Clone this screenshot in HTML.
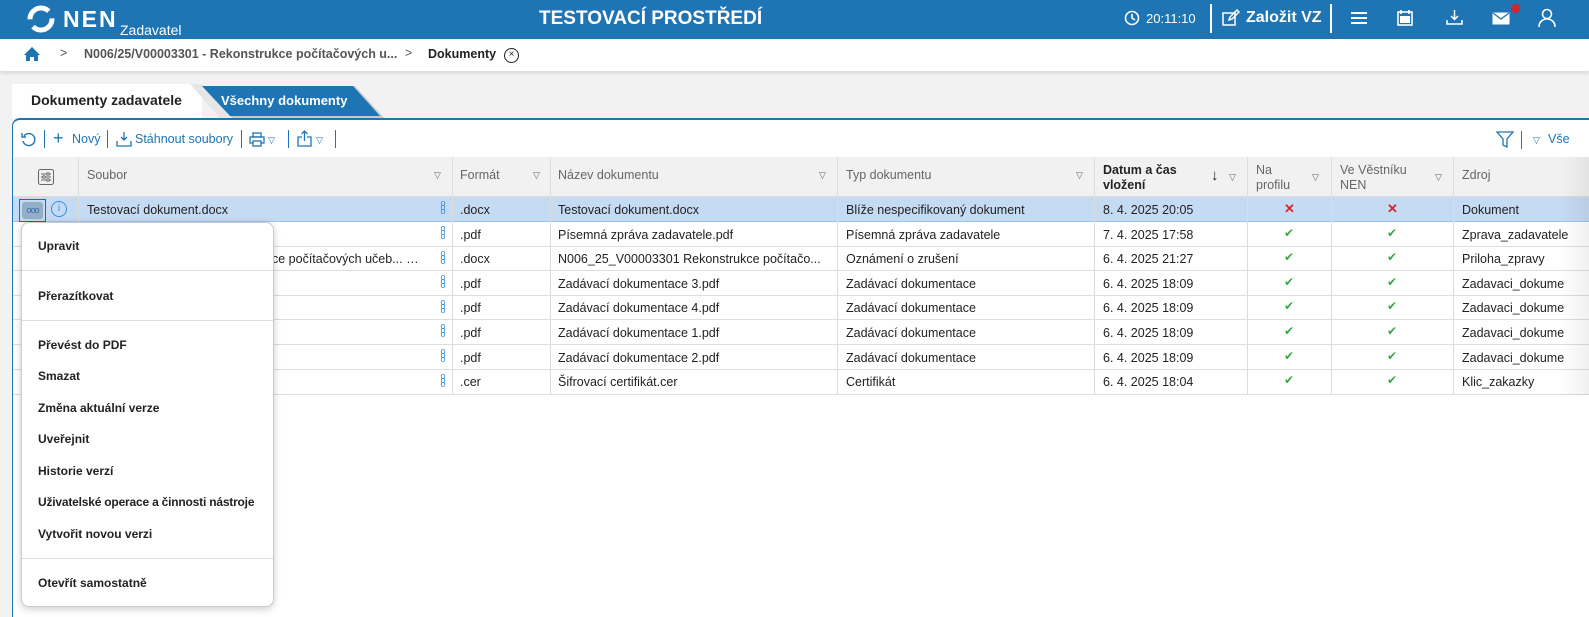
<!DOCTYPE html>
<html><head><meta charset="utf-8"><style>
*{box-sizing:border-box;margin:0;padding:0}
body{width:1589px;height:617px;overflow:hidden;background:#f2f2f2;font-family:"Liberation Sans",sans-serif;font-size:12.5px;color:#222;position:relative}
.a{position:absolute;white-space:nowrap}
.top{left:0;top:0;width:1589px;height:39px;background:#1f74b3;color:#fff}
.bc{left:0;top:39px;width:1589px;height:32px;background:#fff;box-shadow:0 2px 4px rgba(0,0,0,.12)}
.panel{left:12px;top:118px;width:1577px;height:499px;background:#fff;border-top:2px solid #1f74b3;border-left:1px solid #1f74b3;border-top-left-radius:8px}
.hdr{top:157px;height:40px;background:#f1f1f1;border-bottom:1px solid #ddd}
.vl{width:1px;background:#ddd}
.row{left:13px;width:1576px;border-bottom:1px solid #ddd;background:#fff}
.hl{background:#c5daf3;border-bottom:1px solid #9fc3ee}
.ht{color:#666}
.tri{color:#666;font-size:9px}
.g{color:#3aa64a;font-size:12px}
.r{color:#d9262c;font-size:13px;font-weight:bold}
.menu{left:21px;top:222px;width:253px;height:385px;background:#fff;border:1px solid #ccc;border-radius:8px;box-shadow:0 2px 8px rgba(0,0,0,.2)}
.mi{left:16px;font-weight:bold;font-size:12px;color:#222}
.sep{left:0;width:251px;height:1px;background:#ddd}
.dots{color:#3a8ed6;font-size:9px;line-height:4px;width:6px;text-align:center}
</style></head><body>
<div class="a top">
 <svg class="a" style="left:26px;top:4px" width="30" height="30" viewBox="0 0 30 30"><circle cx="15" cy="15" r="11" fill="none" stroke="#fff" stroke-width="5" stroke-dasharray="26 8"/></svg>
 <div class="a" style="left:63px;top:6px;font-size:23px;font-weight:bold;letter-spacing:2px">NEN</div>
 <div class="a" style="left:120px;top:22px;font-size:14px">Zadavatel</div>
 <div class="a" style="left:539px;top:8px;font-size:19px;font-weight:bold">TESTOVACÍ PROSTŘEDÍ</div>
 <svg class="a" style="left:1124px;top:10px" width="16" height="16"><circle cx="8" cy="8" r="6.5" fill="none" stroke="#fff" stroke-width="1.6"/><path d="M8 4v4l3 2" stroke="#fff" stroke-width="1.6" fill="none"/></svg>
 <div class="a" style="left:1146px;top:11px;font-size:13px">20:11:10</div>
 <div class="a" style="left:1210px;top:4px;width:2px;height:29px;background:#fff"></div>
 <svg class="a" style="left:1222px;top:9px" width="18" height="18"><rect x="1" y="4" width="12" height="12" fill="none" stroke="#fff" stroke-width="1.5"/><path d="M7 11l1-3 7-7 2 2-7 7z" fill="none" stroke="#fff" stroke-width="1.5"/></svg>
 <div class="a" style="left:1246px;top:9px;font-size:16px;font-weight:bold">Založit VZ</div>
 <div class="a" style="left:1330px;top:4px;width:2px;height:29px;background:#fff"></div>
 <div class="a" style="left:1351px;top:12px;width:16px;height:2px;background:#fff;box-shadow:0 5px 0 #fff,0 10px 0 #fff"></div>
 <svg class="a" style="left:1397px;top:9px" width="16" height="17"><rect x="1" y="3" width="14" height="13" fill="none" stroke="#fff" stroke-width="1.6"/><rect x="3" y="7" width="10" height="7" fill="#fff"/><path d="M4 1v4M12 1v4" stroke="#fff" stroke-width="1.6"/></svg>
 <svg class="a" style="left:1446px;top:9px" width="17" height="17"><path d="M8.5 1v9M5 7l3.5 3.5L12 7M1 11v4h15v-4" fill="none" stroke="#fff" stroke-width="1.5"/></svg>
 <svg class="a" style="left:1492px;top:12px" width="18" height="13"><rect x="0.5" y="0.5" width="17" height="12" fill="#fff"/><path d="M1 1l8 6 8-6" fill="none" stroke="#1f74b3" stroke-width="1.3"/></svg>
 <div class="a" style="left:1511px;top:4px;width:9px;height:9px;border-radius:50%;background:#d3262c"></div>
 <svg class="a" style="left:1538px;top:8px" width="18" height="20"><circle cx="9" cy="6" r="4.5" fill="none" stroke="#fff" stroke-width="1.6"/><path d="M1 19c0-5 3.5-8 8-8s8 3 8 8" fill="none" stroke="#fff" stroke-width="1.6"/></svg>
</div>
<div class="a bc">
 <svg class="a" style="left:23px;top:7px" width="18" height="16"><path d="M9 1L1 9h2v6h4v-4h4v4h4V9h2z" fill="#1f74b3"/></svg>
 <div class="a" style="left:60px;top:7px;color:#555">&gt;</div>
 <div class="a" style="left:84px;top:8px;font-weight:bold;color:#555;font-size:12.5px">N006/25/V00003301 - Rekonstrukce počítačových u...</div>
 <div class="a" style="left:405px;top:7px;color:#555">&gt;</div>
 <div class="a" style="left:428px;top:8px;font-weight:bold;font-size:12.5px">Dokumenty</div>
 <div class="a" style="left:504px;top:9px;width:15px;height:15px;border:1.3px solid #222;border-radius:50%;font-size:10px;line-height:12px;text-align:center">×</div>
</div>
<div class="a" style="left:12px;top:84px;width:190px;height:34px;background:#fff"></div>
<div class="a" style="left:31px;top:92px;font-size:14px;font-weight:bold">Dokumenty zadavatele</div>
<svg class="a" style="left:190px;top:84px" width="195" height="34"><polygon points="0,0 12,0 40,34 30,34" fill="#e6e6e6"/><polygon points="12,2 165,2 194,34 42,34" fill="#c9c9c9"/><polygon points="12,2 163,2 190,32 40,32" fill="#1f74b3"/></svg>
<div class="a" style="left:221px;top:93px;font-size:13px;font-weight:bold;color:#fff">Všechny dokumenty</div>
<div class="a panel"></div>
<svg class="a" style="left:21px;top:131px" width="16" height="16"><path d="M3 5a6 6 0 1 1-1 5" fill="none" stroke="#1f74b3" stroke-width="1.4"/><path d="M1 2v4h4" fill="none" stroke="#1f74b3" stroke-width="1.4"/></svg>
<div class="a" style="left:44px;top:130px;width:1px;height:18px;background:#1f74b3"></div>
<div class="a" style="left:53px;top:128px;font-size:18px;color:#1f74b3">+</div>
<div class="a" style="left:72px;top:132px;color:#1f74b3">Nový</div>
<div class="a" style="left:107px;top:130px;width:1px;height:18px;background:#1f74b3"></div>
<svg class="a" style="left:116px;top:131px" width="16" height="16"><path d="M8 1v8M5 6l3 3 3-3M1 10v5h14v-5" fill="none" stroke="#1f74b3" stroke-width="1.3"/></svg>
<div class="a" style="left:135px;top:132px;color:#1f74b3">Stáhnout soubory</div>
<div class="a" style="left:241px;top:130px;width:1px;height:18px;background:#1f74b3"></div>
<svg class="a" style="left:249px;top:132px" width="16" height="15"><rect x="4" y="1" width="8" height="4" fill="none" stroke="#1f74b3" stroke-width="1.3"/><rect x="1" y="5" width="14" height="6" fill="none" stroke="#1f74b3" stroke-width="1.3"/><rect x="4" y="9" width="8" height="5" fill="#fff" stroke="#1f74b3" stroke-width="1.3"/></svg>
<div class="a tri" style="left:268px;top:135px;color:#1f74b3">▽</div>
<div class="a" style="left:288px;top:130px;width:1px;height:18px;background:#1f74b3"></div>
<svg class="a" style="left:297px;top:130px" width="15" height="17"><path d="M7.5 1v10M4.5 4l3-3 3 3M5 7H1v9h13V7h-4" fill="none" stroke="#1f74b3" stroke-width="1.3"/></svg>
<div class="a tri" style="left:316px;top:135px;color:#1f74b3">▽</div>
<div class="a" style="left:335px;top:130px;width:1px;height:18px;background:#1f74b3"></div>
<svg class="a" style="left:1496px;top:131px" width="18" height="17"><path d="M1 1h16l-6 7v8l-4-2V8z" fill="none" stroke="#1f74b3" stroke-width="1.3"/></svg>
<div class="a" style="left:1521px;top:131px;width:1px;height:18px;background:#1f74b3"></div>
<div class="a tri" style="left:1533px;top:135px;color:#1f74b3">▽</div>
<div class="a" style="left:1548px;top:132px;color:#1f74b3">Vše</div>
<div class="a hdr" style="left:13px;width:1576px"></div>
<svg class="a" style="left:38px;top:169px" width="16" height="16"><rect x="0.5" y="0.5" width="15" height="15" rx="2" fill="none" stroke="#666"/><path d="M3 5h10M3 8h10M3 11h10" stroke="#666"/><circle cx="10" cy="5" r="1.3" fill="#fff" stroke="#666"/><circle cx="6" cy="8" r="1.3" fill="#fff" stroke="#666"/><circle cx="10" cy="11" r="1.3" fill="#fff" stroke="#666"/></svg>
<div class="a ht" style="left:87px;top:168px">Soubor</div><div class="a tri" style="left:434px;top:170px">▽</div>
<div class="a ht" style="left:460px;top:168px">Formát</div><div class="a tri" style="left:533px;top:170px">▽</div>
<div class="a ht" style="left:558px;top:168px">Název dokumentu</div><div class="a tri" style="left:819px;top:170px">▽</div>
<div class="a ht" style="left:846px;top:168px">Typ dokumentu</div><div class="a tri" style="left:1076px;top:170px">▽</div>
<div class="a" style="left:1103px;top:163px;font-weight:bold;line-height:15px">Datum a čas<br>vložení</div>
<div class="a" style="left:1211px;top:167px;font-size:15px">↓</div><div class="a tri" style="left:1229px;top:172px">▽</div>
<div class="a ht" style="left:1256px;top:163px;line-height:15px">Na<br>profilu</div><div class="a tri" style="left:1312px;top:172px">▽</div>
<div class="a ht" style="left:1340px;top:163px;line-height:15px">Ve Věstníku<br>NEN</div><div class="a tri" style="left:1435px;top:172px">▽</div>
<div class="a ht" style="left:1462px;top:168px">Zdroj</div>
<div class="a row hl" style="top:197px;height:25px"></div>
<div class="a row" style="top:222px;height:25px"></div>
<div class="a row" style="top:247px;height:24px"></div>
<div class="a row" style="top:271px;height:25px"></div>
<div class="a row" style="top:296px;height:24px"></div>
<div class="a row" style="top:320px;height:25px"></div>
<div class="a row" style="top:345px;height:25px"></div>
<div class="a row" style="top:370px;height:25px"></div>
<div class="a vl" style="left:78px;top:157px;height:238px"></div>
<div class="a vl" style="left:452px;top:157px;height:238px"></div>
<div class="a vl" style="left:550px;top:157px;height:238px"></div>
<div class="a vl" style="left:837px;top:157px;height:238px"></div>
<div class="a vl" style="left:1094px;top:157px;height:238px"></div>
<div class="a vl" style="left:1247px;top:157px;height:238px"></div>
<div class="a vl" style="left:1331px;top:157px;height:238px"></div>
<div class="a vl" style="left:1453px;top:157px;height:238px"></div>
<div class="a" style="left:19px;top:199px;width:27px;height:23px;border:1px solid #d9262c;background:#c5daf3"><div style="margin:2px;width:21px;height:17px;background:#93aec9;border-radius:3px;color:#3a6fa8;font-size:9px;text-align:center;line-height:16px;letter-spacing:-1px">ooo</div></div>
<div class="a" style="left:51px;top:201px;width:16px;height:16px;border:1.3px solid #3a8ed6;border-radius:50%;color:#3a8ed6;font-size:10px;text-align:center;line-height:13px">i</div>
<div class="a" style="left:87px;top:203px">Testovací dokument.docx</div>
<div class="a" style="left:272px;top:252px">ce počítačových učeb... …</div>
<div class="a dots" style="left:440px;top:201px">o<br>o<br>o</div>
<div class="a dots" style="left:440px;top:226px">o<br>o<br>o</div>
<div class="a dots" style="left:440px;top:251px">o<br>o<br>o</div>
<div class="a dots" style="left:440px;top:275px">o<br>o<br>o</div>
<div class="a dots" style="left:440px;top:300px">o<br>o<br>o</div>
<div class="a dots" style="left:440px;top:324px">o<br>o<br>o</div>
<div class="a dots" style="left:440px;top:349px">o<br>o<br>o</div>
<div class="a dots" style="left:440px;top:374px">o<br>o<br>o</div>
<div class="a" style="left:460px;top:203px">.docx</div><div class="a" style="left:460px;top:228px">.pdf</div><div class="a" style="left:460px;top:252px">.docx</div><div class="a" style="left:460px;top:277px">.pdf</div><div class="a" style="left:460px;top:301px">.pdf</div><div class="a" style="left:460px;top:326px">.pdf</div><div class="a" style="left:460px;top:351px">.pdf</div><div class="a" style="left:460px;top:375px">.cer</div>
<div class="a" style="left:558px;top:203px">Testovací dokument.docx</div><div class="a" style="left:558px;top:228px">Písemná zpráva zadavatele.pdf</div><div class="a" style="left:558px;top:252px">N006_25_V00003301 Rekonstrukce počítačo...</div><div class="a" style="left:558px;top:277px">Zadávací dokumentace 3.pdf</div><div class="a" style="left:558px;top:301px">Zadávací dokumentace 4.pdf</div><div class="a" style="left:558px;top:326px">Zadávací dokumentace 1.pdf</div><div class="a" style="left:558px;top:351px">Zadávací dokumentace 2.pdf</div><div class="a" style="left:558px;top:375px">Šifrovací certifikát.cer</div>
<div class="a" style="left:846px;top:203px">Blíže nespecifikovaný dokument</div><div class="a" style="left:846px;top:228px">Písemná zpráva zadavatele</div><div class="a" style="left:846px;top:252px">Oznámení o zrušení</div><div class="a" style="left:846px;top:277px">Zadávací dokumentace</div><div class="a" style="left:846px;top:301px">Zadávací dokumentace</div><div class="a" style="left:846px;top:326px">Zadávací dokumentace</div><div class="a" style="left:846px;top:351px">Zadávací dokumentace</div><div class="a" style="left:846px;top:375px">Certifikát</div>
<div class="a" style="left:1103px;top:203px">8. 4. 2025 20:05</div><div class="a" style="left:1103px;top:228px">7. 4. 2025 17:58</div><div class="a" style="left:1103px;top:252px">6. 4. 2025 21:27</div><div class="a" style="left:1103px;top:277px">6. 4. 2025 18:09</div><div class="a" style="left:1103px;top:301px">6. 4. 2025 18:09</div><div class="a" style="left:1103px;top:326px">6. 4. 2025 18:09</div><div class="a" style="left:1103px;top:351px">6. 4. 2025 18:09</div><div class="a" style="left:1103px;top:375px">6. 4. 2025 18:04</div>
<div class="a r" style="left:1284px;top:201px">✕</div><div class="a r" style="left:1387px;top:201px">✕</div>
<div class="a g" style="left:1284px;top:226px">✔</div><div class="a g" style="left:1387px;top:226px">✔</div>
<div class="a g" style="left:1284px;top:250px">✔</div><div class="a g" style="left:1387px;top:250px">✔</div>
<div class="a g" style="left:1284px;top:275px">✔</div><div class="a g" style="left:1387px;top:275px">✔</div>
<div class="a g" style="left:1284px;top:299px">✔</div><div class="a g" style="left:1387px;top:299px">✔</div>
<div class="a g" style="left:1284px;top:324px">✔</div><div class="a g" style="left:1387px;top:324px">✔</div>
<div class="a g" style="left:1284px;top:349px">✔</div><div class="a g" style="left:1387px;top:349px">✔</div>
<div class="a g" style="left:1284px;top:373px">✔</div><div class="a g" style="left:1387px;top:373px">✔</div>
<div class="a" style="left:1462px;top:203px">Dokument</div><div class="a" style="left:1462px;top:228px">Zprava_zadavatele</div><div class="a" style="left:1462px;top:252px">Priloha_zpravy</div><div class="a" style="left:1462px;top:277px">Zadavaci_dokume</div><div class="a" style="left:1462px;top:301px">Zadavaci_dokume</div><div class="a" style="left:1462px;top:326px">Zadavaci_dokume</div><div class="a" style="left:1462px;top:351px">Zadavaci_dokume</div><div class="a" style="left:1462px;top:375px">Klic_zakazky</div>
<div class="a" style="left:1560px;top:157px;width:29px;height:238px;background:linear-gradient(90deg,rgba(0,0,0,0),rgba(0,0,0,.06))"></div>
<div class="a menu">
 <div class="a mi" style="top:16px">Upravit</div>
 <div class="a sep" style="top:47px"></div>
 <div class="a mi" style="top:66px">Přerazítkovat</div>
 <div class="a sep" style="top:97px"></div>
 <div class="a mi" style="top:115px">Převést do PDF</div>
 <div class="a mi" style="top:146px">Smazat</div>
 <div class="a mi" style="top:178px">Změna aktuální verze</div>
 <div class="a mi" style="top:209px">Uveřejnit</div>
 <div class="a mi" style="top:241px">Historie verzí</div>
 <div class="a mi" style="top:272px;letter-spacing:-0.2px">Uživatelské operace a činnosti nástroje</div>
 <div class="a mi" style="top:304px">Vytvořit novou verzi</div>
 <div class="a sep" style="top:335px"></div>
 <div class="a mi" style="top:353px">Otevřít samostatně</div>
</div>
</body></html>
